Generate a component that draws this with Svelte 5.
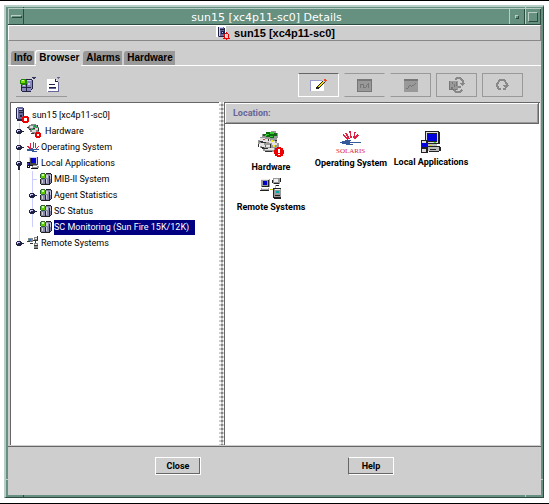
<script lang="ts">
	type TreeNode = {
		label: string;
		icon: string;
		handle?: "closed" | "open" | "none";
		children?: TreeNode[];
	};

	const host = "sun15 [xc4p11-sc0]";
	const tabs = ["Info", "Browser", "Alarms", "Hardware"];

	const tools = [
		{ icon: "edit", label: "Edit attributes", enabled: true },
		{ icon: "probe", label: "Probe", enabled: false },
		{ icon: "graph", label: "Graph", enabled: false },
		{ icon: "reload", label: "Reload module", enabled: false },
		{ icon: "refresh", label: "Refresh", enabled: false },
	];

	const nodes: TreeNode[] = [
		{ label: "Hardware", icon: "hardware-small", handle: "closed" },
		{ label: "Operating System", icon: "solaris-small", handle: "closed" },
		{
			label: "Local Applications",
			icon: "local-small",
			handle: "open",
			children: [
				{ label: "MIB-II System", icon: "module" },
				{ label: "Agent Statistics", icon: "module", handle: "closed" },
				{ label: "SC Status", icon: "module", handle: "closed" },
				{ label: "SC Monitoring (Sun Fire 15K/12K)", icon: "module", handle: "none" },
			],
		},
		{ label: "Remote Systems", icon: "remote-small", handle: "closed" },
	];

	const items = [
		{ label: "Hardware", icon: "hardware" },
		{ label: "Operating System", icon: "solaris" },
		{ label: "Local Applications", icon: "local" },
		{ label: "Remote Systems", icon: "remote" },
	];

	let activeTab = $state("Browser");
	let selected = $state("SC Monitoring (Sun Fire 15K/12K)");
</script>

{#snippet icon(name: string)}
	{#if name === "server"}
		<svg width="14" height="16" viewBox="0 0 14 16">
			<path fill="#666699" d="M1 0h6v13h-6z" />
			<path fill="#222244" d="M0 1h1v11h-1zM7 1h1v12h-1zM1 12h7v2h-7zM3 3h4v1h-4zM3 5h4v1h-4zM4 8h2v2h-2z" />
			<path fill="#ccccff" d="M1 1h1v10h-1zM3 2h3v1h-3z" />
			<path fill="#fff" d="M8 10h3v3h-3z" />
			<path fill="#e00" d="M7 9h5v1h1v5h-1v1h-5v-1h-1v-5h1zM8 11v3h3v-3z" fill-rule="evenodd" />
		</svg>
	{:else if name === "server-bell"}
		<svg width="14" height="14" viewBox="0 0 14 14">
			<path fill="#fff" d="M0 0h10v11h-10z" />
			<path fill="#666699" d="M2 1h6v10h-6z" />
			<path fill="#222244" d="M2 1h1v9h-1zM8 2h1v9h-1zM4 3h4v1h-4zM5 5h3v3h-3zM3 10h6v1h-6z" />
			<path fill="#ccccff" d="M3 1h4v1h-4zM3 2h1v8h-1zM6 6h1v1h-1z" />
			<path fill="#e00" d="M10 6h1v1h1v1h1v4h1v1h-3v1h-1v-1h-3v-1h1v-4h1v-1h1zM9 8v4h3v-4z" fill-rule="evenodd" />
		</svg>
	{:else if name === "hardware-small"}
		<svg width="16" height="15" viewBox="0 0 16 15">
			<path fill="#888" d="M2 1h2v-1h5v1h2v2h1v5h-2v2h-5v-2h-2v-3h-2v-3h1z" />
			<path fill="#ddd" d="M3 2h3v2h-3zM5 6h4v2h-4zM8 4h3v2h-3z" />
			<path fill="#333" d="M0 3h2v1h-2zM2 5h2v1h-2zM6 4h2v1h-2zM11 4h1v3h-1zM4 9h3v1h-3zM10 1h1v2h-1z" />
			<path fill="#0a4" d="M7 1h2v2h-2zM5 5h1v1h-1zM9 3h1v1h-1z" />
			<path fill="#e00" d="M9 8h4v1h1v4h-1v1h-4v-1h-1v-4h1zM10 10v2h2v-2z" fill-rule="evenodd" />
		</svg>
	{:else if name === "solaris-small"}
		<svg width="12" height="12" viewBox="0 0 12 12">
			<path fill="none" stroke="#d24" d="M0 5l4 3M3 2l1 5M6 1v6M9 2l-1 5M12 5l-3 3" />
			<path fill="#345a9a" d="M0 8h4v-1h2v1h6v1h-5v1h3v1h-5v-1h-5v-1h-1z" />
		</svg>
	{:else if name === "local-small"}
		<svg width="12" height="12" viewBox="0 0 12 12">
			<path fill="#444" d="M2 0h9v8h-9z" />
			<path fill="#ccccff" d="M2 0h8v1h-8zM2 1h1v6h-1zM9 1h1v6h-1z" />
			<path fill="#0000cc" d="M4 1h5v5h-5z" />
			<path fill="#999" d="M4 8h6v1h2v2h-7v-2h-1z" />
			<path fill="#112" d="M0 5h3v6h-3zM4 11h7v1h-7zM3 8h3v1h-3z" />
			<path fill="#33c" d="M0 6h2v2h-2z" />
			<path fill="#fff" d="M1 9h1v1h-1zM6 9h4v1h-4z" />
		</svg>
	{:else if name === "remote-small"}
		<svg width="12" height="14" viewBox="0 0 12 14">
			<path fill="#888" d="M1 2h5v4h-5zM7 1h4v3h-4zM7 7h4v6h-4z" />
			<path fill="#27c" d="M2 3h2v2h-2z" />
			<path fill="#333" d="M0 5h3v1h-3zM3 7h3v1h-3zM10 0h1v5h-1zM6 4h4v1h-4zM8 5h1v2h-1zM7 9h4v1h-4zM7 12h4v1h-4z" />
			<path fill="#eee" d="M8 2h2v1h-2zM8 8h2v1h-2z" />
			<path fill="#d33" d="M4 5h1v1h-1z" />
		</svg>
	{:else if name === "module"}
		<svg width="12" height="12" viewBox="0 0 12 12">
			<path fill="#8888aa" d="M1 3h3v-2h7v9h-2v1h-8z" />
			<path fill="#222" d="M6 0h5v1h-5zM11 1h1v9h-1zM10 10h1v1h-1zM1 11h9v1h-9zM5 6h1v5h-1zM9 3h1v8h-1zM0 6h1v5h-1z" />
			<path fill="#ccccdd" d="M2 7h1v3h-1zM6 2h2v3h-2zM10 2h1v4h-1zM6 6h1v4h-1z" />
			<path fill="#263" d="M1 0h4v1h1v4h-1v1h-4v-1h-1v-4h1z" />
			<path fill="#6c0" d="M1 1h4v4h-4z" />
			<path fill="#cf9" d="M2 1h2v2h-2z" />
		</svg>
	{:else if name === "modules"}
		<svg width="17" height="16" viewBox="0 0 17 16">
			<path fill="#8888bb" d="M2 4h4v-1h6v9h-1v2h-9z" />
			<path fill="#222244" d="M6 2h6v1h-6zM12 3h1v9h-1zM11 12h1v1h-1zM2 14h9v1h-9zM1 7h1v7h-1zM6 4h1v10h-1zM2 10h9v1h-9z" />
			<path fill="#ccccff" d="M7 3h4v1h-4zM3 8h2v1h-2zM8 6h2v2h-2z" />
			<path fill="#280" d="M1 2h5v1h1v4h-1v1h-5v-1h-1v-4h1z" />
			<path fill="#7d0" d="M1 3h4v3h-4z" />
			<path fill="#dfa" d="M2 3h2v1h-2z" />
			<path fill="#336" d="M12 0h4v1h-1v1h-2v-1h-1z" />
		</svg>
	{:else if name === "document"}
		<svg width="14" height="16" viewBox="0 0 14 16">
			<path fill="#fff" d="M0 2h8l3 3v10h-11z" />
			<path fill="#222244" d="M2 7h6v1h-6zM2 10h7v1h-7zM8 2h1v2h2v1h-3z" />
			<path fill="#666699" d="M11 5h1v10h-1zM1 14h10v1h-10zM2 11h7v1h-7zM10 0h3v1h-1v1h-1v-1h-1z" />
		</svg>
	{:else if name === "edit"}
		<svg width="17" height="13" viewBox="0 0 17 13">
			<path fill="#fff" d="M1 2h13v10h-13z" />
			<path fill="#9999cc" d="M0 1h12v1h-11v10h-1z" />
			<path fill="#222" d="M6 8h1v-1h1v-1h1v-1h1v-1h1v-1h1v-1h1v-1h2v3h-1v1h-1v1h-1v1h-1v1h-1v1h-1v1h-3z" />
			<path fill="#fd0" d="M8 7h1v-1h1v-1h1v-1h1v-1h1v-1h1v2h-1v1h-1v1h-1v1h-1v1h-2z" />
			<path fill="#e42" d="M14 0h2v1h1v1h-1v1h-1v-1h-1z" />
			<path fill="#ccc" d="M13 1h1v1h1v1h-1v1h-1z" />
		</svg>
	{:else if name === "probe"}
		<svg width="15" height="13" viewBox="0 0 15 13">
			<path fill="#999" d="M0 0h15v13h-15z" />
			<path
				fill="#777"
				d="M0 0h15v2h-15zM0 2h1v11h-1zM14 2h1v11h-1zM1 12h13v1h-13zM3 5h1v4h-1zM4 5h2v1h-2zM6 5h1v4h-1zM7 8h2v1h-2zM9 6h1v2h-1zM10 5h2v1h-2zM11 4h1v5h-1z"
			/>
		</svg>
	{:else if name === "graph"}
		<svg width="14" height="13" viewBox="0 0 14 13">
			<path fill="#999" d="M0 0h14v13h-14z" />
			<path fill="#777" d="M0 0h14v2h-14zM2 9h2v1h-2zM4 7h1v2h-1zM5 6h2v1h-2zM7 7h1v1h-1zM8 6h2v1h-2zM10 5h1v1h-1zM11 4h1v1h-1z" />
		</svg>
	{:else if name === "reload"}
		<svg width="16" height="16" viewBox="0 0 16 16">
			<path fill="#999" d="M0 4h9v9h-9z" />
			<path fill="#777" d="M0 4h1v9h-1zM3 5h1v2h-1zM5 7h1v3h-1zM2 10h2v2h-2zM7 5h1v4h-1zM1 12h7v1h-7z" />
			<path fill="none" stroke="#888" stroke-width="2" d="M6 3l2-2h3l3 3v2M5 13l2 2h4l2-2" />
			<path fill="#888" d="M10 6h6l-3 3zM9 11h3v-2l-5 0z" />
		</svg>
	{:else if name === "refresh"}
		<svg width="13" height="12" viewBox="0 0 13 12">
			<path fill="none" stroke="#888" stroke-width="2" d="M5 10h-2l-2-3v-2l3-4h4l3 4v2" />
			<path fill="#888" d="M7 6h6l-3 4zM7 9h3v2h-3z" />
		</svg>
	{:else if name === "hardware"}
		<svg width="28" height="28" viewBox="0 0 28 28">
			<path fill="#999" d="M5 3h4v-2h5v-1h5v2h2v5h-1v5h2v7h-4v2h-7v-1h-5v-3h-3v-4h-2v-4h2v-3h2z" />
			<path fill="#e4e4e4" d="M3 7h5v1h5v2h5v2h-6v-1h-6v-1h-3zM3 12h4v2h6v2h-8v-1h-2zM8 17h9v2h-9zM15 12h5v2h-5z" />
			<path fill="#161" d="M6 3h3v-2h8v1h3v3h-3v2h-4v-1h-4v-1h-3z" />
			<path fill="#3c3" d="M9 3h3v1h-3zM13 1h4v2h-4zM13 5h3v1h-3zM8 4h2v1h-2z" />
			<path fill="#333" d="M3 10h3v1h3v1h-5v-1h-1zM1 13h1v3h-1zM4 16h3v1h4v1h-6v-1h-1zM13 13h1v4h-1zM18 9h2v1h-2zM8 20h7v1h-7zM11 8h1v2h-1z" />
			<path fill="#ee0" d="M14 9h2v2h-2zM16 14h2v2h-2z" />
			<path fill="#c43" d="M6 8h2v1h-2zM8 14h1v2h-1zM2 10h1v1h-1z" />
			<circle cx="22" cy="21" r="5" fill="#e00" />
			<path fill="#fff" d="M21 18h2v4h-2zM21 23h2v1h-2z" />
		</svg>
	{:else if name === "solaris"}
		<svg width="30" height="24" viewBox="0 0 30 24">
			<path fill="none" stroke="#d24" stroke-width="1.5" d="M7 4l5 4M10 2l3 6M14 0l1 7M19 1l-1 6M22 4l-4 4" />
			<path fill="#345a9a" d="M4 11l7-2h5l-3 2h12v1h-12l5 2h-6l-8-2z" />
			<text x="0" y="22">SOLARIS</text>
		</svg>
	{:else if name === "local"}
		<svg width="22" height="23" viewBox="0 0 22 23">
			<path fill="#222" d="M5 0h14v1h1v12h-15z" />
			<path fill="#ddd" d="M6 1h12v11h-12z" />
			<path fill="#222" d="M7 2h10v9h-10z" />
			<path fill="#0000dd" d="M8 3h9v7h-9z" />
			<path fill="#bbb" d="M8 13h9v2h-9zM8 16h12v4h-12z" />
			<path fill="#222" d="M1 9h7v13h-7zM8 15h12v1h-12zM19 16h2v4h-2zM9 20h10v1h-10zM10 18h6v1h-6z" />
			<path fill="#ddd" d="M2 10h4v2h-4zM2 18h4v3h-4z" />
			<path fill="#0000dd" d="M2 12h5v4h-5z" />
			<path fill="#3c3" d="M14 11h2v1h-2z" />
			<path fill="#cc0" d="M10 14h1v1h-1z" />
		</svg>
	{:else}
		<svg width="22" height="22" viewBox="0 0 22 22">
			<path fill="#999" d="M1 2h9v8h-9zM13 1h7v6h-7zM14 12h7v9h-7zM1 11h8v3h-8z" />
			<path fill="#0000cc" d="M3 4h4v4h-4z" />
			<path fill="#eee" d="M1 2h8v1h-8zM14 2h4v3h-4zM15 12h5v1h-5zM2 11h6v1h-6z" />
			<path fill="#222" d="M8 3h1v6h-1zM2 9h7v1h-7zM0 13h9v1h-9zM12 3h1v3h-1zM14 6h5v1h-5zM20 1h1v4h-1zM13 11h8v1h-8zM13 12h1v9h-1zM14 20h7v2h-7zM15 18h5v1h-5zM16 8h3v1h-3z" />
			<path fill="#0aa" d="M16 14h3v2h-3z" />
			<path fill="#cc0" d="M10 12h3v1h-3zM15 8h1v3h-1z" />
		</svg>
	{/if}
{/snippet}

{#snippet handle(kind: string | undefined)}
	<svg class="handle" width="8" height="16" viewBox="0 0 8 16">
		{#if kind === "closed" || kind === "open"}
			<path fill="#222244" d="M1 6h4v1h1v3h-1v1h-4v-1h-1v-3h1z" />
			<path fill="#ccccff" d="M1 7h3v2h-3z" />
			<path fill="#222244" d={kind === "closed" ? "M2 8h6v1h-6z" : "M2 8h2v7h-2z"} />
		{:else if kind !== "none"}
			<path fill="#ccccff" d="M3 8h5v1h-5z" />
		{/if}
	</svg>
{/snippet}

{#snippet branch(list: TreeNode[])}
	<ul class="branch" role="group">
		{#each list as node}
			<li role="treeitem" aria-selected={selected === node.label}>
				<div class="node">
					{@render handle(node.handle)}
					{@render icon(node.icon)}
					<button
						class="node-label"
						class:selected={selected === node.label}
						onclick={() => (selected = node.label)}>{node.label}</button
					>
				</div>
				{#if node.children}
					{@render branch(node.children)}
				{/if}
			</li>
		{/each}
	</ul>
{/snippet}

<div class="screen">
	<div class="window">
		<header class="titlebar">
			<button class="frame-button" aria-label="Window menu"><span class="bar"></span></button>
			<h1>{host} Details</h1>
			<button class="frame-button" aria-label="Minimize"><span class="dot"></span></button>
			<button class="frame-button" aria-label="Maximize"><span class="box"></span></button>
		</header>

		<div class="host">
			{@render icon("server-bell")}
			<span>{host}</span>
		</div>

		<div class="tabs" role="tablist">
			{#each tabs as tab}
				<button
					class="tab"
					role="tab"
					class:active={tab === activeTab}
					aria-selected={tab === activeTab}
					onclick={() => (activeTab = tab)}>{tab}</button
				>
			{/each}
		</div>

		<div class="toolbar">
			<div class="menus">
				<button aria-label="Load module">{@render icon("modules")}</button>
				<button aria-label="Document">{@render icon("document")}</button>
			</div>
			<div class="tools">
				{#each tools as tool}
					<button class="tool {tool.icon}" aria-label={tool.label} disabled={!tool.enabled}>
						{@render icon(tool.icon)}
					</button>
				{/each}
			</div>
		</div>

		<main class="split">
			<nav class="tree" role="tree" aria-label="Hierarchy">
				<div class="node">
					{@render icon("server")}
					<button class="node-label" onclick={() => (selected = host)}>{host}</button>
				</div>
				{@render branch(nodes)}
			</nav>
			<div class="divider"></div>
			<section class="contents">
				<div class="location">Location:</div>
				<div class="items">
					{#each items as item}
						<button class="item">
							{@render icon(item.icon)}
							<span>{item.label}</span>
						</button>
					{/each}
				</div>
			</section>
		</main>

		<footer>
			<button class="push">Close</button>
			<button class="push help">Help</button>
		</footer>
	</div>
</div>

<style>
	:global(body) {
		background: #fff;
	}

	.screen {
		box-sizing: border-box;
		min-height: 100vh;
		display: flex;
		flex-direction: column;
		padding: 4px 5px 5px 4px;
		border-top: 1px solid #000;
		border-bottom: 1px solid #000;
		font: 9px/16px "Liberation Sans", Arial, sans-serif;
		color: #000;
	}

	button {
		margin: 0;
		padding: 0;
		border: 0;
		background: none;
		font: inherit;
		color: inherit;
	}

	svg {
		display: block;
		flex: none;
		shape-rendering: crispEdges;
	}

	.window {
		position: relative;
		isolation: isolate;
		flex: 1;
		display: flex;
		flex-direction: column;
		padding: 1px 2px 2px;
		border: solid;
		border-width: 2px 1px 1px 2px;
		border-color: #b8cec6 #2c4a40 #2c4a40 #b8cec6;
		background: #66907f;
	}

	/* resize notches of the frame, hidden behind the content */
	.window::before,
	.window::after {
		content: "";
		position: absolute;
		z-index: -1;
	}

	.window::before {
		left: 0;
		right: 0;
		bottom: 17px;
		height: 1px;
		background: #b8cec6;
	}

	.window::after {
		top: 0;
		bottom: 0;
		left: 17px;
		right: 17px;
		border-left: 1px solid #2c4a40;
		border-right: 1px solid #b8cec6;
	}

	.titlebar {
		display: flex;
		height: 15px;
		border-top: 1px solid #b8cec6;
		border-bottom: 1px solid #2c4a40;
		background: #66907f;
		color: #fff;
	}

	.titlebar h1 {
		flex: 1;
		margin: 0;
		font: 11px/18px "DejaVu Sans", sans-serif;
		text-align: center;
	}

	.frame-button {
		display: flex;
		align-items: center;
		justify-content: center;
		width: 16px;
		border-left: 1px solid #b8cec6;
		border-right: 1px solid #2c4a40;
	}

	.bar {
		width: 9px;
		height: 1px;
		border: 1px solid #b8cec6;
		border-right-color: #2c4a40;
		border-bottom-color: #2c4a40;
	}

	.dot {
		width: 2px;
		height: 2px;
		border: 1px solid #b8cec6;
		border-right-color: #2c4a40;
		border-bottom-color: #2c4a40;
	}

	.box {
		width: 8px;
		height: 8px;
		border: 1px solid #b8cec6;
		border-right-color: #2c4a40;
		border-bottom-color: #2c4a40;
	}

	.host {
		display: flex;
		align-items: center;
		justify-content: center;
		gap: 4px;
		height: 14px;
		padding-left: 2px;
		border: 1px solid #fff;
		border-right-color: #888;
		border-bottom-color: #888;
		background: #cecece;
		font-size: 11px;
		line-height: 14px;
		font-weight: bold;
	}

	.tabs {
		display: flex;
		gap: 2px;
		padding: 10px 3px 0;
		border-bottom: 1px solid #fff;
		background: #cecece;
	}

	.tab {
		height: 14px;
		padding: 0 2px 0 3px;
		background: #999;
		border-top-left-radius: 3px;
		font-size: 10px;
		line-height: 14px;
		font-weight: bold;
	}

	.tab.active {
		background: #cecece;
		box-shadow: -1px -1px #fff, 0 1px #cecece;
	}

	.toolbar {
		display: flex;
		justify-content: space-between;
		padding: 7px 18px 5px 8px;
		background: #cecece;
	}

	.menus {
		display: flex;
		gap: 10px;
		padding: 4px 6px 3px 4px;
		border-bottom: 1px solid #999;
	}

	.tools {
		display: flex;
		gap: 5px;
	}

	.tool {
		display: flex;
		align-items: center;
		justify-content: center;
		box-sizing: border-box;
		width: 41px;
		height: 24px;
		border: 1px solid #999;
	}

	.tool.edit {
		border-color: #666 #fff #fff;
	}

	.tool.probe {
		border-left-color: transparent;
		border-right-color: transparent;
	}

	.tool.graph {
		border-left-color: transparent;
	}

	.split {
		flex: 1;
		display: flex;
		padding: 0 1px 1px 2px;
		border-bottom: 1px solid #666;
		background: #cecece;
	}

	.tree {
		box-sizing: border-box;
		width: calc(40% - 3px);
		padding: 4px 0 0 5px;
		border: solid #666;
		border-width: 1px 0 0 1px;
		background: #fff;
		font-family: Roboto, sans-serif;
	}

	.node {
		display: flex;
		align-items: center;
		gap: 2px;
		height: 16px;
	}

	.handle {
		margin-right: 1px;
	}

	.node-label {
		line-height: 15px;
		white-space: nowrap;
	}

	.node-label.selected {
		padding-right: 6px;
		background: #000080;
		color: #fff;
	}

	.branch {
		margin: 0;
		padding: 0;
		list-style: none;
		background: linear-gradient(#ccccff, #ccccff) 3px 0 / 1px calc(100% - 8px) no-repeat;
	}

	.branch .branch {
		margin-left: 13px;
	}

	.divider {
		width: 5px;
		background-color: #cecece;
		background-image: radial-gradient(circle at 1px 1px, #fff 1px, transparent 1px),
			radial-gradient(circle at 3px 3px, #888 1px, transparent 1px);
		background-size: 4px 4px;
	}

	.contents {
		flex: 1;
		border: solid #666;
		border-width: 1px 0 0 1px;
		background: #fff;
	}

	.location {
		height: 20px;
		margin-right: 1px;
		padding-left: 8px;
		border: solid #666;
		border-width: 0 1px 1px 0;
		background: #cecece;
		box-shadow: inset 1px 1px #fff, inset -1px -1px #999;
		color: #666699;
		font-family: Roboto, sans-serif;
		font-weight: bold;
		line-height: 20px;
	}

	.items {
		display: grid;
		grid-template-columns: repeat(auto-fill, 80px);
		row-gap: 4px;
		padding: 7px 6px;
	}

	.item {
		display: flex;
		flex-direction: column;
		align-items: center;
		align-self: start;
		gap: 2px;
		font-family: Roboto, sans-serif;
		font-weight: bold;
		line-height: 12px;
		white-space: nowrap;
	}

	.item text {
		fill: #d24;
		font: 7px "Liberation Serif", serif;
	}

	footer {
		display: flex;
		justify-content: space-evenly;
		padding: 10px 0 20px;
		background: #cecece;
	}

	.push {
		box-sizing: border-box;
		width: 46px;
		height: 18px;
		border: 1px solid #fff;
		box-shadow: inset -1px -1px #666;
		font-family: Roboto, sans-serif;
		font-weight: bold;
	}

	.push.help {
		box-shadow: inset 0 -1px #666;
		border-left-color: #666;
	}
</style>
